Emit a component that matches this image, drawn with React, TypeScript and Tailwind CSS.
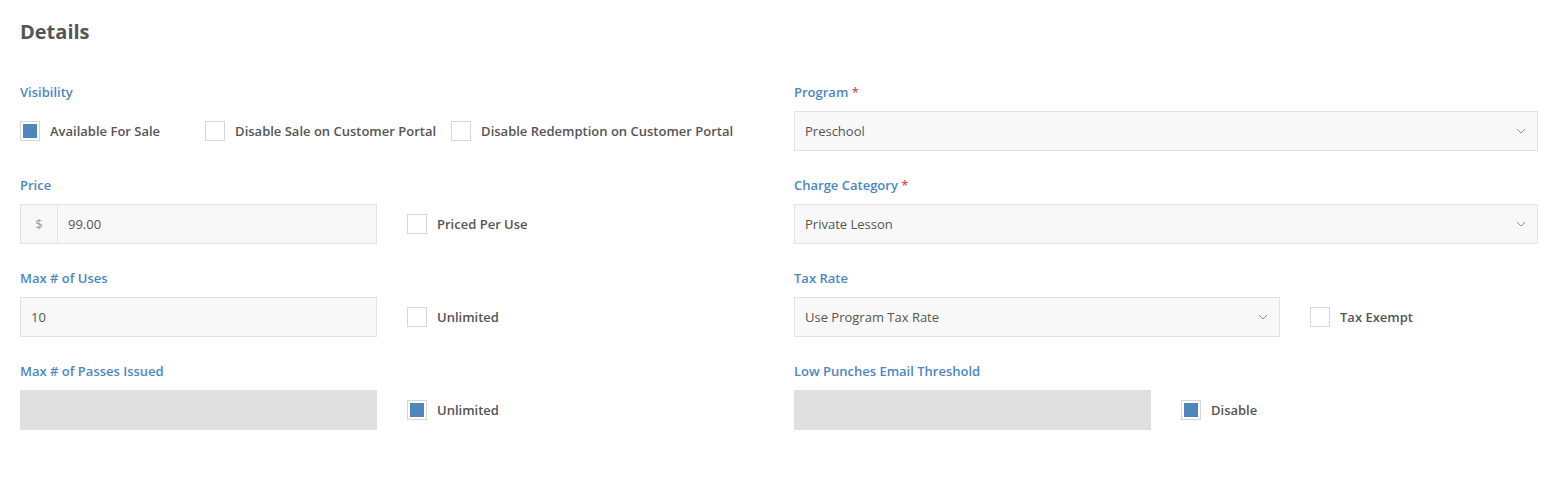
const font = { fontFamily: '"Open Sans", "Liberation Sans", sans-serif' };

const Label = ({ text, required }: { text: string; required?: boolean }) => (
  <div className="h-[18px] mb-[10px] text-[13px] leading-[18px] font-semibold text-[#4a87c3]">
    {text}
    {required && <span className="text-[#d9534f]"> *</span>}
  </div>
);

const Check = ({ label, checked, className = "" }: { label: string; checked?: boolean; className?: string }) => (
  <label className={`flex items-center h-10 ${className}`}>
    <span className="w-5 h-5 border border-[#d6d6d6] bg-white flex items-center justify-center shrink-0">
      {checked && <span className="w-[14px] h-[14px] bg-[#4f86bd]" />}
    </span>
    <span className="ml-[10px] pt-[2px] text-[13px] font-semibold text-[#555]">{label}</span>
  </label>
);

const Chevron = () => (
  <svg width="10" height="6" viewBox="0 0 10 6" className="shrink-0">
    <path d="M1 1 L5 5 L9 1" fill="none" stroke="#8193a8" strokeWidth="1" />
  </svg>
);

const Select = ({ value, className = "" }: { value: string; className?: string }) => (
  <div className={`h-10 bg-[#f8f8f8] border border-[#e3e3e3] flex items-center justify-between pl-[10px] pr-[11px] text-[13px] text-[#555] ${className}`}>
    <span className="pt-[2px]">{value}</span>
    <Chevron />
  </div>
);

const Input = ({ value }: { value: string }) => (
  <div className="h-10 w-[357px] bg-[#f8f8f8] border border-[#e3e3e3] flex items-center px-[10px] text-[13px] text-[#555]">
    <span className="pt-[2px]">{value}</span>
  </div>
);

const Disabled = () => <div className="h-10 w-[357px] bg-[#e0e0e0]" />;

export default function App() {
  return (
    <div className="bg-white w-[1559px] h-[480px] px-5 pt-[19px]" style={font}>
      <h2 className="text-[20px] leading-[26px] font-bold text-[#555]">Details</h2>
      <div className="mt-[38px] grid grid-cols-[744px_744px] gap-x-[30px] gap-y-[25px]">
        <div>
          <Label text="Visibility" />
          <div className="flex">
            <Check label="Available For Sale" checked className="mr-[45px]" />
            <Check label="Disable Sale on Customer Portal" className="mr-[15px]" />
            <Check label="Disable Redemption on Customer Portal" />
          </div>
        </div>
        <div>
          <Label text="Program" required />
          <Select value="Preschool" />
        </div>

        <div>
          <Label text="Price" />
          <div className="flex gap-[30px]">
            <div className="h-10 w-[357px] bg-[#f8f8f8] border border-[#e3e3e3] flex items-center text-[13px] text-[#555]">
              <span className="w-[37px] h-full flex items-center justify-center pt-[2px] border-r border-[#e3e3e3] text-[#8d9aa8]">$</span>
              <span className="pl-[10px] pt-[2px]">99.00</span>
            </div>
            <Check label="Priced Per Use" />
          </div>
        </div>
        <div>
          <Label text="Charge Category" required />
          <Select value="Private Lesson" />
        </div>

        <div>
          <Label text="Max # of Uses" />
          <div className="flex gap-[30px]">
            <Input value="10" />
            <Check label="Unlimited" />
          </div>
        </div>
        <div>
          <Label text="Tax Rate" />
          <div className="flex gap-[30px]">
            <Select value="Use Program Tax Rate" className="w-[486px]" />
            <Check label="Tax Exempt" />
          </div>
        </div>

        <div>
          <Label text="Max # of Passes Issued" />
          <div className="flex gap-[30px]">
            <Disabled />
            <Check label="Unlimited" checked />
          </div>
        </div>
        <div>
          <Label text="Low Punches Email Threshold" />
          <div className="flex gap-[30px]">
            <Disabled />
            <Check label="Disable" checked />
          </div>
        </div>
      </div>
    </div>
  );
}
